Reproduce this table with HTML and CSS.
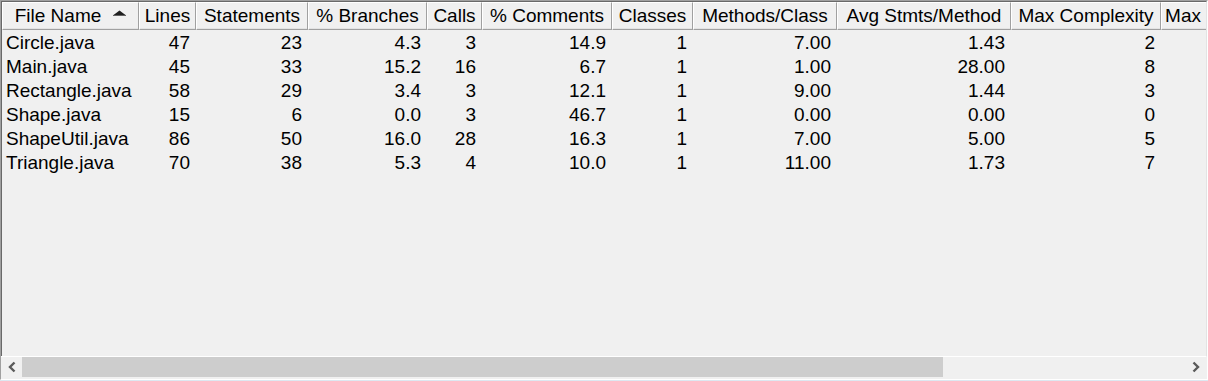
FILE: index.html
```html
<!DOCTYPE html>
<html>
<head>
<meta charset="utf-8">
<link rel="stylesheet" href="styles.css">
</head>
<body>
<div class="frame">
  <div class="viewport">
    <table class="grid">
      <colgroup>
        <col class="c-name"><col class="c-lines"><col class="c-stmts"><col class="c-branch"><col class="c-calls"><col class="c-comm"><col class="c-classes"><col class="c-mpc"><col class="c-avg"><col class="c-maxc"><col class="c-max">
      </colgroup>
      <thead>
        <tr>
          <th><span class="sorted">File Name<svg class="sort" width="13" height="6" viewBox="0 0 13 6"><polygon points="0.5,5 6.5,0.5 12.5,5" fill="#202020"/><line x1="0" y1="5.5" x2="13" y2="5.5" stroke="#606060" stroke-width="1"/></svg></span></th>
          <th>Lines</th>
          <th>Statements</th>
          <th>% Branches</th>
          <th>Calls</th>
          <th>% Comments</th>
          <th>Classes</th>
          <th>Methods/Class</th>
          <th>Avg Stmts/Method</th>
          <th>Max Complexity</th>
          <th>Max Depth</th>
        </tr>
      </thead>
      <tbody>
        <tr><td>Circle.java</td><td>47</td><td>23</td><td>4.3</td><td>3</td><td>14.9</td><td>1</td><td>7.00</td><td>1.43</td><td>2</td><td></td></tr>
        <tr><td>Main.java</td><td>45</td><td>33</td><td>15.2</td><td>16</td><td>6.7</td><td>1</td><td>1.00</td><td>28.00</td><td>8</td><td></td></tr>
        <tr><td>Rectangle.java</td><td>58</td><td>29</td><td>3.4</td><td>3</td><td>12.1</td><td>1</td><td>9.00</td><td>1.44</td><td>3</td><td></td></tr>
        <tr><td>Shape.java</td><td>15</td><td>6</td><td>0.0</td><td>3</td><td>46.7</td><td>1</td><td>0.00</td><td>0.00</td><td>0</td><td></td></tr>
        <tr><td>ShapeUtil.java</td><td>86</td><td>50</td><td>16.0</td><td>28</td><td>16.3</td><td>1</td><td>7.00</td><td>5.00</td><td>5</td><td></td></tr>
        <tr><td>Triangle.java</td><td>70</td><td>38</td><td>5.3</td><td>4</td><td>10.0</td><td>1</td><td>11.00</td><td>1.73</td><td>7</td><td></td></tr>
      </tbody>
    </table>
  </div>
  <div class="hscroll">
    <div class="sbtn"><svg width="10" height="12" viewBox="0 0 10 12"><polyline points="7.5,1.5 3,6 7.5,10.5" fill="none" stroke="#5a5a5a" stroke-width="2.4"/></svg></div>
    <div class="track"><div class="thumb"></div></div>
    <div class="sbtn"><svg width="10" height="12" viewBox="0 0 10 12"><polyline points="2.5,1.5 7,6 2.5,10.5" fill="none" stroke="#5a5a5a" stroke-width="2.4"/></svg></div>
  </div>
</div>
</body>
</html>
```

FILE: styles.css
```css
html, body {
  margin: 0;
  padding: 0;
}
body {
  width: 1208px;
  height: 381px;
  background: #dde8f1;
  font-family: "Liberation Sans", Arial, sans-serif;
  font-size: 19px;
  color: #000;
  overflow: hidden;
}
.frame {
  box-sizing: border-box;
  width: 1208px;
  height: 380px;
  background: #f0f0f0;
  border-top: 1px solid #a0a0a0;
  border-left: 1px solid #a0a0a0;
  border-right: 1px solid #fff;
  border-bottom: 1px solid #fff;
  display: flex;
  flex-direction: column;
}
.viewport {
  flex: 1;
  overflow: hidden;
  border-top: 1px solid #696969;
  border-left: 1px solid #696969;
  border-right: 1px solid #e3e3e3;
}
.grid {
  table-layout: fixed;
  border-collapse: separate;
  border-spacing: 0;
  width: 1259px;
}
.c-name { width: 137px; }
.c-lines { width: 57px; }
.c-stmts { width: 112px; }
.c-branch { width: 119px; }
.c-calls { width: 55px; }
.c-comm { width: 130px; }
.c-classes { width: 81px; }
.c-mpc { width: 144px; }
.c-avg { width: 174px; }
.c-maxc { width: 150px; }
.c-max { width: 100px; }
th {
  height: 28px;
  box-sizing: border-box;
  padding: 0 1px 1px;
  font-weight: normal;
  text-align: center;
  white-space: nowrap;
  overflow: hidden;
  background: #f0f0f0;
  border-top: 1px solid #fff;
  border-left: 1px solid #fff;
  border-right: 1px solid #a0a0a0;
  border-bottom: 1px solid #a0a0a0;
  box-shadow: inset 0 -1px 0 #e3e3e3;
}
.sorted {
  display: inline-flex;
  align-items: center;
  gap: 12px;
}
.sort {
  display: block;
  margin-bottom: 5px;
}
td {
  height: 24px;
  padding: 0 6px 0 4px;
  text-align: right;
  white-space: nowrap;
  overflow: hidden;
}
tbody tr:first-child td {
  padding-top: 1px;
}
td:first-child {
  text-align: left;
  padding-left: 4px;
}
.hscroll {
  height: 20px;
  margin-bottom: 2px;
  margin-right: 1px;
  border-top: 1px solid #fff;
  display: flex;
  background: #f0f0f0;
}
.sbtn {
  width: 21px;
  display: flex;
  align-items: center;
  justify-content: center;
}
.track {
  flex: 1;
  display: flex;
}
.thumb {
  width: 921px;
  background: #cdcdcd;
}
```
